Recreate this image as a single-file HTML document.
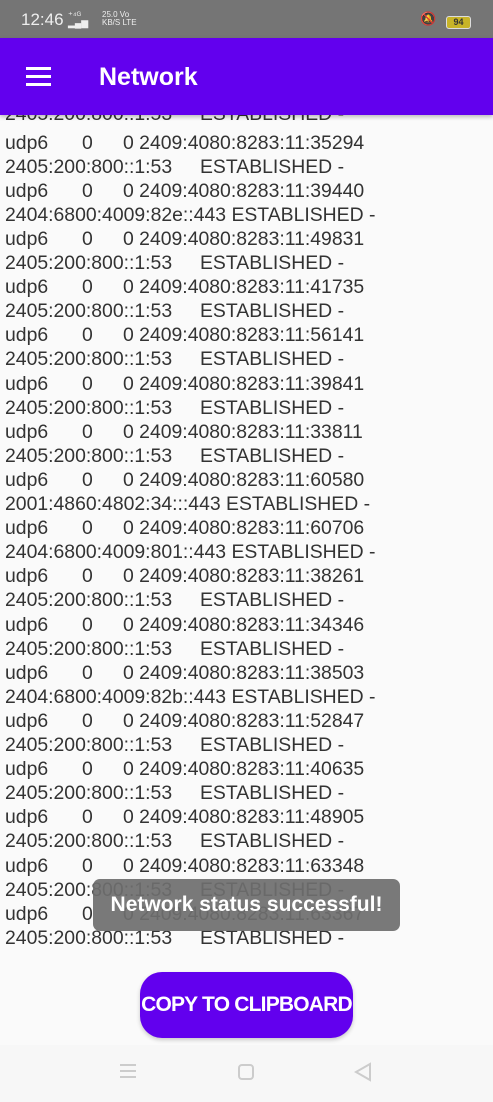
<!DOCTYPE html>
<html><head><meta charset="utf-8"><style>
*{margin:0;padding:0;box-sizing:border-box}
body{width:493px;height:1102px;overflow:hidden;background:#fafafa;font-family:"Liberation Sans",sans-serif;position:relative}
.sb{position:absolute;top:0;left:0;width:493px;height:38px;background:#757575;color:#eee}
.ab{position:absolute;top:38px;left:0;width:493px;height:77px;background:#6200ee;box-shadow:0 2px 4px rgba(0,0,0,.25);z-index:2}
.content{position:absolute;top:115px;left:0;width:493px;height:840px;overflow:hidden}
.l{position:absolute;left:5px;height:24px;font-size:19.4px;color:#333;white-space:pre;line-height:24px}
.l span{position:absolute}
.toast{position:absolute;left:93px;top:879px;width:307px;height:52px;background:rgba(110,110,110,.92);border-radius:7px;color:#fff;font-size:21px;font-weight:bold;text-align:center;line-height:52px;z-index:3}
.btn{position:absolute;left:140px;top:972px;width:213px;height:66px;background:#6200ee;border-radius:22px;color:#fff;font-size:21px;font-weight:bold;text-align:center;line-height:66px;box-shadow:0 2px 4px rgba(0,0,0,.2);letter-spacing:-0.8px;white-space:nowrap}
</style></head><body>
<div class="sb">
<span style="position:absolute;left:21px;top:10px;font-size:17px">12:46</span>
<span style="position:absolute;left:68px;top:11px;font-size:9px;line-height:8px">⁺⁴ᴳ<br>▂▄▆</span>
<span style="position:absolute;left:102px;top:11px;font-size:8px;line-height:8px">25.0 Vo<br>KB/S LTE</span>
<span style="position:absolute;left:420px;top:11px;font-size:13px">🔕</span>
<span style="position:absolute;left:446px;top:16px;width:25px;height:13px;background:#c8b428;border:1.5px solid #ddd;border-radius:3px;font-size:9px;color:#333;text-align:center;line-height:10px;font-weight:bold">94</span>
</div>
<div class="ab">
<div style="position:absolute;left:26px;top:29px;width:25px;height:3px;background:#fff;box-shadow:0 8px 0 #fff,0 16px 0 #fff"></div>
<div style="position:absolute;left:99px;top:25px;color:#fff;font-size:25px;font-weight:bold">Network</div>
</div>
<div class="content" id="c"></div>
<div class="toast">Network status successful!</div>
<div class="btn">COPY TO CLIPBOARD</div>
<div style="position:absolute;top:1045px;left:0;width:493px;height:57px;background:#f7f7f7"></div>
<div style="position:absolute;left:120px;top:1064px;width:16px;height:2px;background:#ccc;box-shadow:0 6px 0 #ccc,0 12px 0 #ccc"></div>
<div style="position:absolute;left:238px;top:1064px;width:16px;height:16px;border:2px solid #ccc;border-radius:4px"></div>
<svg style="position:absolute;left:354px;top:1062px" width="18" height="20"><path d="M16 2 L2 10 L16 18 Z" fill="none" stroke="#ccc" stroke-width="2"/></svg>
<script>
var ports=["35294","39440","49831","41735","56141","39841","33811","60580","60706","38261","34346","38503","52847","40635","48905","63348","63367"];
var rem={1:"2404:6800:4009:82e::443 ESTABLISHED -",7:"2001:4860:4802:34:::443 ESTABLISHED -",8:"2404:6800:4009:801::443 ESTABLISHED -",11:"2404:6800:4009:82b::443 ESTABLISHED -"};
var h='',y=-13;
h+='<div class="l" style="top:'+y+'px">2405:200:800::1:53<span style="left:195px">ESTABLISHED -</span></div>';
for(var i=0;i<ports.length;i++){
y=15.5+i*48.2;
h+='<div class="l" style="top:'+y+'px">udp6<span style="left:77px">0</span><span style="left:118px">0 2409:4080:8283:11:'+ports[i]+'</span></div>';
var r=rem[i]?rem[i]:'2405:200:800::1:53<span style="left:195px">ESTABLISHED -</span>';
h+='<div class="l" style="top:'+(y+24.1)+'px">'+r+'</div>';
}
document.getElementById('c').innerHTML=h;
</script>
</body></html>
